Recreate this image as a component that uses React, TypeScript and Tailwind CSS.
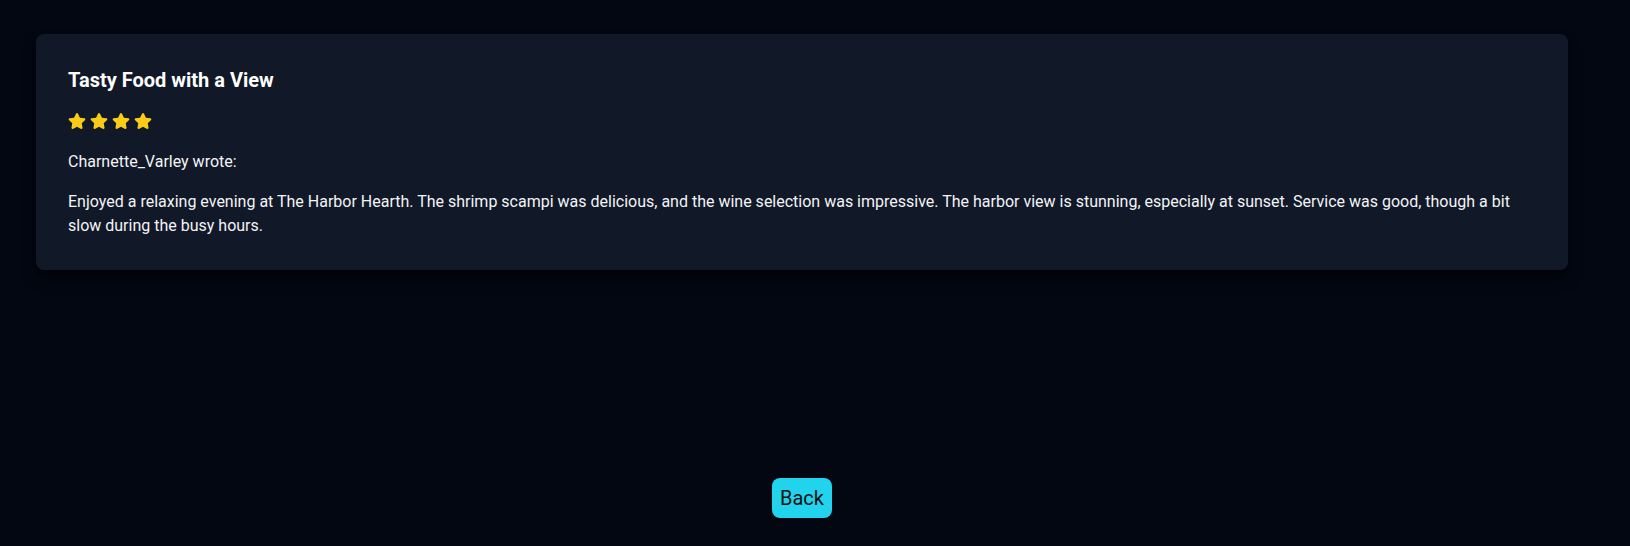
import { FaStar } from "react-icons/fa";

const review = {
  title: "Tasty Food with a View",
  rating: 4,
  author: "Charnette_Varley",
  body: "Enjoyed a relaxing evening at The Harbor Hearth. The shrimp scampi was delicious, and the wine selection was impressive. The harbor view is stunning, especially at sunset. Service was good, though a bit slow during the busy hours.",
};

export default function App() {
  return (
    <div className="min-h-screen bg-[#030712] font-['Roboto',sans-serif]">
      <div className="ml-9 w-[1532px] pt-[34px] flex flex-col items-center">
        <div className="w-full rounded-lg bg-[#111827] p-8 shadow-lg shadow-black/60 text-gray-100">
          <h3 className="text-xl leading-7 font-bold text-white">{review.title}</h3>
          <div className="mt-[18px] flex gap-1 text-[#facc15]">
            {Array.from({ length: review.rating }).map((_, i) => (
              <FaStar key={i} size={18} />
            ))}
          </div>
          <p className="mt-5">{review.author} wrote:</p>
          <p className="mt-4">{review.body}</p>
        </div>
        <button className="mt-[208px] rounded-lg bg-[#22d3ee] px-2 py-1.5 text-xl text-[#111]">
          Back
        </button>
      </div>
    </div>
  );
}
